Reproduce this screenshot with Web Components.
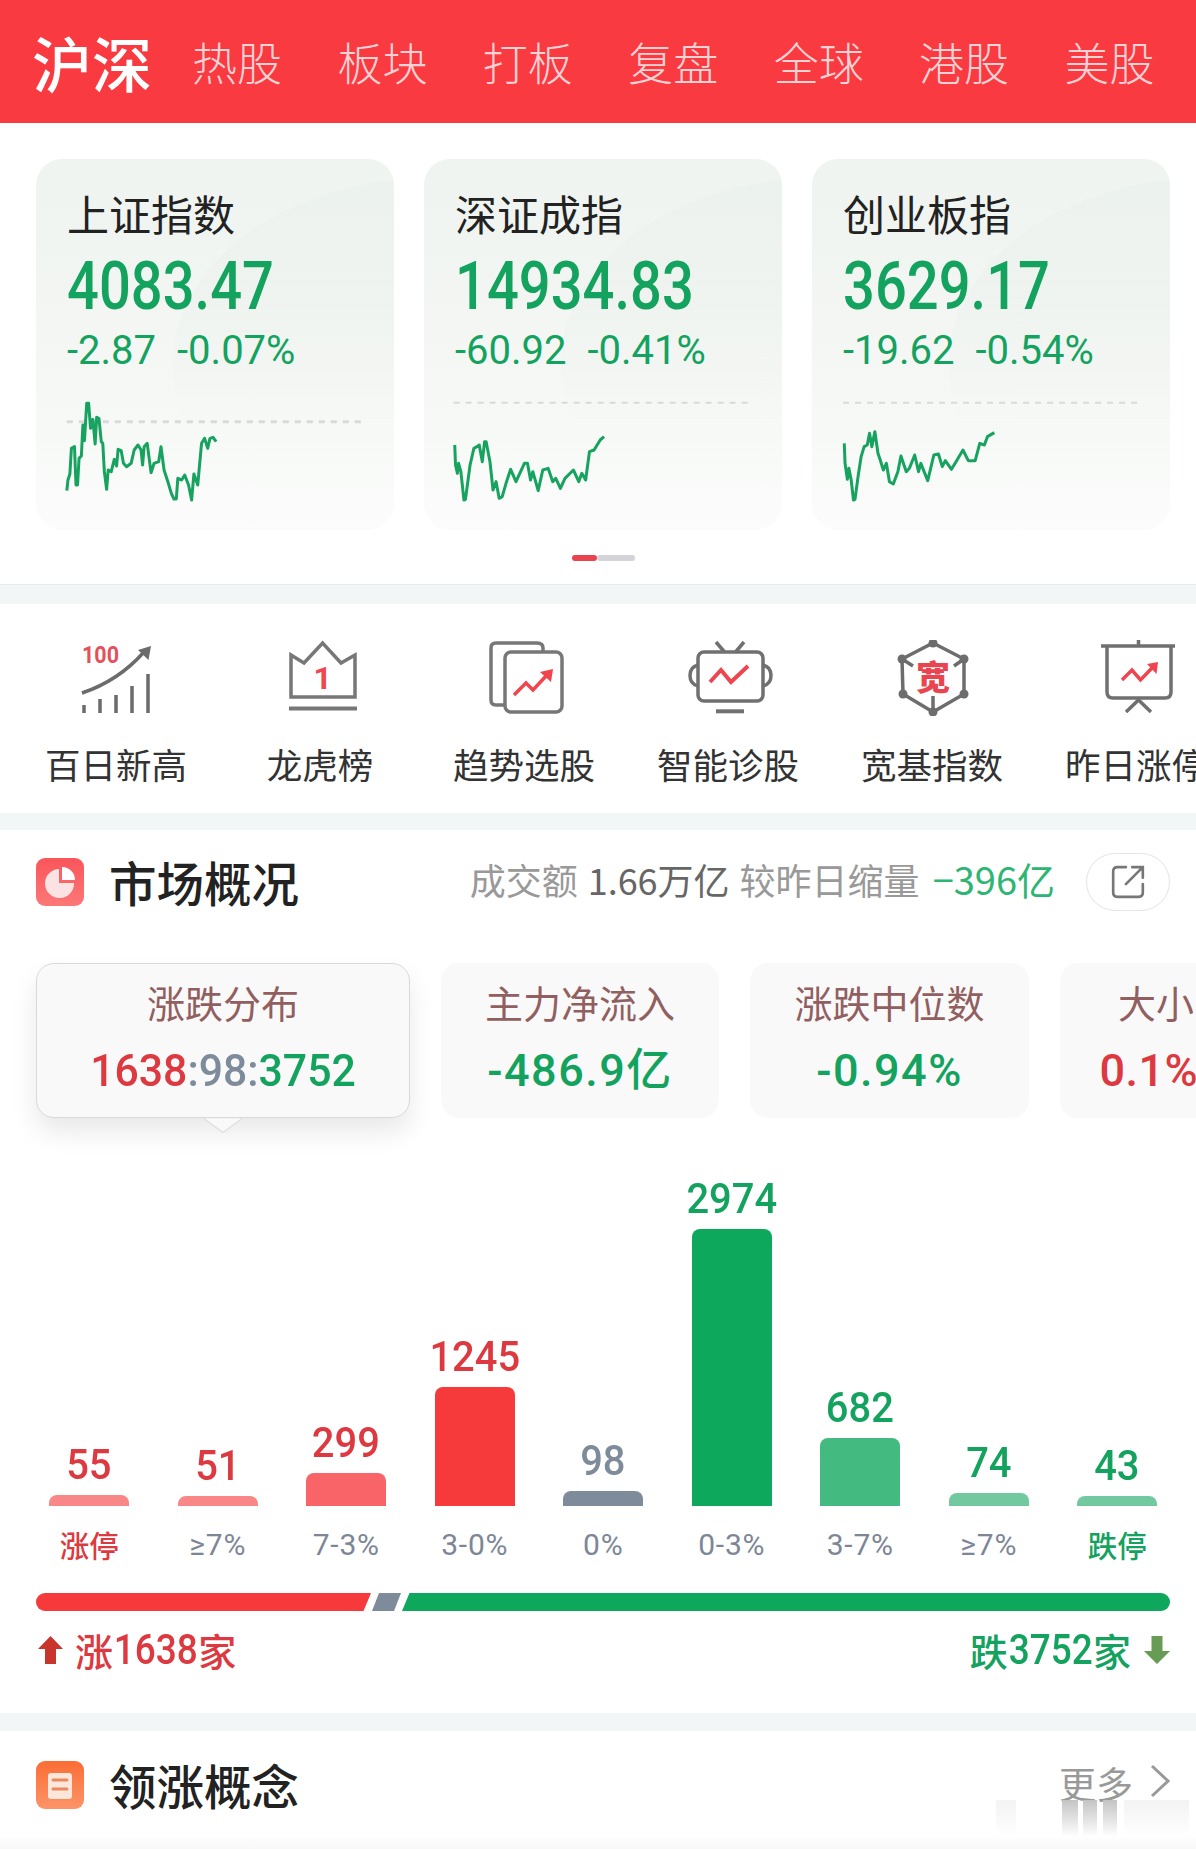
<!DOCTYPE html>
<html lang="zh"><head><meta charset="utf-8"><title>沪深</title>
<style>
html,body{margin:0;padding:0;background:#fff}
body{width:1196px;height:1849px;overflow:hidden;font-family:Roboto,"Noto Sans CJK SC",sans-serif;--num:Roboto,"Noto Sans CJK SC",sans-serif;--red:#dc3a40;--green:#14a25f;color:#222}
</style></head><body>
<market-tabs></market-tabs>
<index-panel>
 <index-card name="上证指数" value="4083.47" c1="-2.87" c2="-0.07%" x0="156.8" lx0="172" lx1="942" ly="365" lw="3" pts="172,572 175,540 180,522 184,445 192,440 196,555 200,555 204,475 210,468 214,375 218,422 224,310 229,310 234,385 240,358 246,432 250,352 256,356 262,425 266,430 270,515 276,568 280,510 288,515 296,478 302,498 306,448 314,452 320,490 328,500 340,490 348,450 358,435 366,450 370,495 374,440 382,430 392,518 400,490 412,485 418,440 426,510 436,545 445,580 452,597 458,597 462,535 472,540 480,525 490,555 498,600 504,522 514,555 524,430 532,415 540,445 546,415 554,412 562,425"></index-card>
 <index-card name="深证成指" value="14934.83" c1="-60.92" c2="-0.41%" x0="1173" lx0="1185" lx1="1957" ly="308" lw="2" pts="1188,435 1190,495 1195,520 1198,490 1204,515 1212,600 1216,598 1228,495 1238,445 1246,440 1252,435 1260,485 1266,425 1270,425 1280,485 1288,570 1296,545 1304,595 1312,590 1322,550 1334,508 1348,545 1370,490 1378,490 1386,540 1392,515 1406,572 1418,510 1432,505 1444,545 1452,535 1464,565 1476,535 1498,510 1512,545 1520,520 1530,540 1540,455 1552,450 1568,420 1578,410"></index-card>
 <index-card name="创业板指" value="3629.17" c1="-19.62" c2="-0.54%" x0="619" lx0="635" lx1="1410" ly="308" lw="2" pts="638,430 640,490 646,538 650,505 656,540 662,600 666,598 674,530 682,470 690,440 698,435 704,400 710,440 718,395 726,460 732,480 740,510 748,490 756,545 766,552 778,515 786,468 800,515 808,505 822,465 832,515 838,490 856,542 872,465 884,462 894,500 902,482 918,508 930,485 948,450 962,482 980,482 992,430 1004,435 1012,410 1030,398"></index-card>
</index-panel>
<gap-bar style="height:19px"></gap-bar>
<shortcut-row>
 <short-cut label="百日新高"><svg viewBox="0 0 80 76" width="80" height="76" fill="none" stroke="#6b6b6b" stroke-width="3.5"><text x="6" y="23" font-family="Roboto" font-weight="700" font-size="24" fill="#e5505a" stroke="none" textLength="37" lengthAdjust="spacingAndGlyphs">100</text><path d="M6 53C30 45 52 30 68 12"/><path d="M75 6 62 10 72.500 20Z" fill="#6b6b6b" stroke="none"/><path d="M8 65V73M24 59V73M40 55V73M56 46V73M72 34V73"/></svg></short-cut>
 <short-cut label="龙虎榜"><svg viewBox="0 0 80 76" width="80" height="76" fill="none" stroke="#777" stroke-width="3.500"><path d="M11 15 24 23 42.600 3 61 23 75 15V57H11Z"/><path d="M9 68.500H77" stroke-width="4"/><text x="42.600" y="49" text-anchor="middle" font-family="Roboto" font-weight="700" font-size="32" fill="#ef4650" stroke="none">1</text></svg></short-cut>
 <short-cut label="趋势选股"><svg viewBox="0 0 80 76" width="80" height="76" fill="none" stroke="#777" stroke-width="3.500"><path d="M59 12V8Q59 3 53 3H12Q7 3 7 8V60Q7 65 12 65H20"/><rect x="21" y="12" width="57" height="60" rx="6"/><path d="M30 55 42 43 49 50 63 35" stroke="#f0454f"/><path d="M69 29 56 32 67 42Z" fill="#f0454f" stroke="none"/></svg></short-cut>
 <short-cut label="智能诊股"><svg viewBox="1 0 86 76" width="86" height="76" fill="none" stroke="#707070" stroke-width="3.500"><rect x="11" y="12" width="65" height="49" rx="6"/><path d="M29 2 37.500 12M57 2 48.600 12"/><path d="M11 25Q3 27 3 35.500T11 46M76 25Q84 27 84 35.500T76 46"/><path d="M29 71.300H57" stroke-width="4"/><path d="M23 42 34 30 44 42 61 26" stroke="#ee4550" stroke-width="4"/></svg></short-cut>
 <short-cut label="宽基指数"><svg viewBox="2 0 86 76" width="86" height="76" fill="none" stroke="#6d6d6d" stroke-width="3.500"><path d="M43 3 74 19V54L43 72 13 54 12 19Z"/><path d="M12 19 23 26M74 19 64 26M43 72V56"/><g fill="#6d6d6d" stroke="none"><circle cx="43" cy="3" r="4.500"/><circle cx="74" cy="19" r="4.500"/><circle cx="74" cy="54" r="4.500"/><circle cx="43" cy="72" r="4.500"/><circle cx="13" cy="54" r="4.500"/><circle cx="12" cy="19" r="4.500"/></g><text x="43" y="50" text-anchor="middle" font-family="Noto Sans CJK SC" font-weight="900" font-size="34" fill="#ea4450" stroke="none">宽</text></svg></short-cut>
 <short-cut label="昨日涨停"><svg viewBox="2 0 86 76" width="86" height="76" fill="none" stroke="#707070" stroke-width="3.500"><path d="M7 6H81M44.500 0V6"/><path d="M13 6V52Q13 58 19 58H71Q77 58 77 52V6"/><path d="M32 72 44.500 60 57 72"/><path d="M28 40 38 30 46.500 40 58 28" stroke="#ee4550"/><path d="M64 22 53 24 62.500 34Z" fill="#ee4550" stroke="none"/></svg></short-cut>
</shortcut-row>
<gap-bar style="height:17px"></gap-bar>
<market-overview></market-overview>
<gap-bar style="height:18px"></gap-bar>
<concept-section></concept-section>
<script>
function reg(name,css,html){
  customElements.define(name,class extends HTMLElement{
    constructor(){super();const r=this.attachShadow({mode:'open'});r.innerHTML='<style>'+css+'</style>'+(typeof html==='function'?html(this):html);}
  });
}
const at=(el,k)=>el.getAttribute(k);

reg('market-tabs',`:host{display:flex;align-items:center;height:123px;background:#fa3a41;padding-left:32px;overflow:hidden;font-family:"Noto Sans CJK SC",sans-serif}
b{font-size:60px;font-weight:500;color:#fff;margin-right:40px;line-height:1;white-space:nowrap}
span{font-size:45px;font-weight:300;color:#fdd2d4;margin-right:55.400px;white-space:nowrap;line-height:1}`,
`<b>沪深</b><span>热股</span><span>板块</span><span>打板</span><span>复盘</span><span>全球</span><span>港股</span><span>美股</span>`);

reg('index-panel',`:host{display:block;padding:36px 26px 0 36px;box-sizing:border-box;border-bottom:1px solid #e8ebec;position:relative;background:#fff;height:462px}
.row{display:flex;gap:30px}
.dots{display:flex;justify-content:center;margin-top:25px}
.dots i{display:block;height:6px;border-radius:3px}
.dots i:first-child{width:25px;background:#e8434f}.dots i:last-child{width:38px;background:#d3d3d8}`,
`<div class="row"><slot></slot></div><div class="dots"><i></i><i></i></div>`);

reg('index-card',`:host{display:block;width:358px;height:371px;flex:none;box-sizing:border-box;padding:26px 0 0 31px;border-radius:26px;position:relative;overflow:hidden;
background:linear-gradient(180deg,#eff4f0 0%,#f3f6f3 45%,#fbfcfb 100%)}
:host::before{content:"";position:absolute;inset:0;background:radial-gradient(ellipse 262px 187px at calc(100% + 40px) 205px,rgba(226,235,229,.22) 0 99.500%,rgba(226,235,229,0) 100%);-webkit-mask-image:linear-gradient(180deg,#000 28%,transparent 72%);mask-image:linear-gradient(180deg,#000 28%,transparent 72%)}
.t,.v,.c{position:relative}
.t{font:400 42px/56px "Noto Sans CJK SC",sans-serif;color:#222}
.v{font:500 66px/70px var(--num);color:var(--green);margin-top:11px;white-space:nowrap;transform:scaleX(.85);transform-origin:0 50%}
.c{font:400 40px/40px var(--num);color:var(--green);margin-top:9px;white-space:nowrap}
.c span{margin-left:21px}
svg{display:block;position:absolute;left:25px;top:236px;overflow:visible}`,
el=>{const x0=at(el,'x0');return `<div class="t">${at(el,'name')}</div><div class="v">${at(el,'value')}</div><div class="c">${at(el,'c1')}<span>${at(el,'c2')}</span></div>
<svg width="320" height="115" viewBox="${x0} 285 836 345" preserveAspectRatio="none" fill="none"><line x1="${at(el,'lx0')}" x2="${at(el,'lx1')}" y1="${at(el,'ly')}" y2="${at(el,'ly')}" stroke="#d9d9d9" stroke-width="${at(el,'lw')}" stroke-dasharray="6 6" vector-effect="non-scaling-stroke"/><polyline points="${at(el,'pts')}" stroke="#17a35f" stroke-width="3" stroke-linejoin="round" vector-effect="non-scaling-stroke"/></svg>`});

reg('gap-bar',`:host{display:block;background:#f3f6f7}`,``);

reg('shortcut-row',`:host{display:flex;height:209px;padding:36px 0 0 14px;box-sizing:border-box;overflow:hidden;background:#fff}`,`<slot></slot>`);
reg('short-cut',`:host{display:flex;flex:none;width:204px;flex-direction:column;align-items:center}
.i{height:76px;width:80px;display:block}
.l{font:400 35.500px/50px "Noto Sans CJK SC",sans-serif;color:#333;margin-top:23px;white-space:nowrap}`,
el=>`<div class="i"><slot></slot></div><div class="l">${at(el,'label')}</div>`);

reg('section-head',`:host{display:flex;align-items:center;height:48px;padding:0 26px 0 36px;font-family:"Noto Sans CJK SC",sans-serif}
.ic{width:48px;height:48px;flex:none;display:block}
h2{margin:0 0 0 25px;font-size:47.500px;font-weight:500;line-height:48px;color:#222;white-space:nowrap}
.r{margin-left:auto;display:flex;align-items:center}`,
`<div class="ic"><slot name="icon"></slot></div><h2><slot name="title"></slot></h2><div class="r"><slot></slot></div>`);

reg('turnover-note',`:host{display:flex;align-items:center;font:400 36px/48px "Noto Sans CJK SC",sans-serif;color:#999;white-space:nowrap;margin-top:-6px}
em{font-style:normal;color:#666;margin:0 10px}i{font-style:normal;color:#2eb574;margin-left:13px;font-size:38px}
.b{width:84px;height:58px;border:1.500px solid #e4e4e4;border-radius:29px;box-sizing:border-box;margin:6px 0 0 31px;display:flex;align-items:center;justify-content:center}`,
`<span>成交额</span><em>1.66万亿</em><span>较昨日缩量</span><i>−396亿</i><div class="b"><svg width="36" height="36" viewBox="0 0 34 34" fill="none" stroke="#777" stroke-width="2.500" stroke-linecap="round"><path d="M15 3H7Q3 3 3 7V27Q3 31 7 31H27Q31 31 31 27V19"/><path d="M15 19 31 3M21 3H31V13"/></svg></div>`);

reg('stat-tab',`:host{display:block;flex:none;box-sizing:border-box;height:155px;border-radius:18px;background:#f9f9fa;padding-top:14px;text-align:center;position:relative}
:host([active]){border:1.500px solid #d9d9d9;padding-top:12.500px;box-shadow:0 14px 26px rgba(0,0,0,.09)}
.notch{position:absolute;left:50%;margin-left:-19px;bottom:-15.500px;display:block}
.t{font:400 38px/50px "Noto Sans CJK SC",sans-serif;color:#925f60;white-space:nowrap}
.v{font:500 45px/60px var(--num);margin-top:14px;white-space:nowrap;letter-spacing:var(--ls,1.500px);transform:scaleX(var(--sx,1));margin-left:var(--vm,0)}`,
el=>`<div class="t">${at(el,'label')}</div><div class="v"><slot></slot></div>${el.hasAttribute('active')?'<svg class="notch" width="38" height="16" viewBox="0 0 38 16"><path d="M0 1.500 19 15.500 38 1.500" fill="#f9f9fa" stroke="#dedede" stroke-width="1.200"/></svg>':''}`);

const B=[[55,11,'#f98787','涨停',1],[51,10,'#f98787','≥7%',0],[299,33,'#f96468','7-3%',0],[1245,119,'#f6393b','3-0%',0],[98,15,'#7e8b9b','0%',0],[2974,277,'#0ea85c','0-3%',0],[682,68,'#43bb80','3-7%',0],[74,13,'#73c99f','≥7%',0],[43,10,'#73c99f','跌停',2]];
const cols=B.map((b,i)=>`<div class="col"><div class="n" style="color:${i<4?'var(--red)':i==4?'#7e8b9b':'var(--green)'}">${b[0]}</div><div class="bar" style="height:${b[1]}px;background:${b[2]}"></div><div class="x ${b[4]==1?'xr':b[4]==2?'xg':''}">${b[3]}</div></div>`).join('');
reg('dist-chart',`:host{display:flex;align-items:flex-end;height:447px;padding-left:25px}
.col{flex:none;width:128.500px;display:flex;flex-direction:column;align-items:center}
.n{font:500 42px/40px var(--num);margin-bottom:10px;transform:scaleX(.95)}
.bar{width:80px;border-radius:8px 8px 0 0}
.x{font:400 30px/40px var(--num);color:#7c8696;margin-top:19px;letter-spacing:.8px;white-space:nowrap}
.xr,.xg{font:500 29.500px/38px "Noto Sans CJK SC",sans-serif;margin-bottom:2px;letter-spacing:0}.xr{color:var(--red)}.xg{color:var(--green)}`,cols);

reg('breadth-bar',`:host{display:block;height:18px;margin:28px 26px 0 36px}svg{display:block}`,
`<svg width="1134" height="18" viewBox="0 0 1134 18"><path d="M9 0H335L327.500 18H9A9 9 0 0 1 9 0Z" fill="#f6393b"/><path d="M343 0H365L358 18H336Z" fill="#7e8b9b"/><path d="M373.500 0H1125A9 9 0 0 1 1125 18H366Z" fill="#0ea85c"/></svg>`);

reg('count-row',`:host{display:flex;justify-content:space-between;align-items:center;height:50px;margin:14px 26px 0 38px;font:500 42px/50px var(--num);white-space:nowrap}
div{display:flex;align-items:center}
.u{color:var(--red)}.d{color:var(--green)}svg{display:block;flex:none}.u svg{margin-right:12px}.d svg{margin-left:13px}
span{font:500 38px/50px "Noto Sans CJK SC",sans-serif}
u{text-decoration:none;display:block;transform:scaleX(.88);margin:0 -5.200px}`,
`<div class="u"><svg width="25" height="28" viewBox="0 0 25 28"><path d="M12.500 0 25 13H18V28H7V13H0Z" fill="#c9352c"/></svg><span>涨</span><u>1638</u><span>家</span></div>
<div class="d"><span>跌</span><u>3752</u><span>家</span><svg width="26" height="28" viewBox="0 0 26 28"><path d="M13 28 0 15H7.500V0H18.500V15H26Z" fill="#689b54"/></svg></div>`);

reg('market-overview',`:host{display:block;background:#fff;height:883px;padding-top:28px;box-sizing:border-box;overflow:hidden}
.tabs{display:flex;gap:31px;padding:57px 0 40px 36px;margin-bottom:-40px;overflow:hidden;position:relative;z-index:1}
.r{color:var(--red)}.g{color:var(--green)}.s{color:#7e8b9b}
stat-tab{flex:none}`,
`<section-head><svg slot="icon" width="48" height="48" viewBox="0 0 48 48"><defs><linearGradient id="a" x1="0" y1="0" x2="0" y2="1"><stop offset="0" stop-color="#f9555a"/><stop offset="1" stop-color="#fd7878"/></linearGradient></defs><rect width="48" height="48" rx="9" fill="url(#a)"/><path d="M23 11V25H38A14.500 14.500 0 1 1 23 11Z" fill="#fbe3e3"/><path d="M26 9A13 13 0 0 1 39 22H26Z" fill="#fff"/></svg><span slot="title">市场概况</span><turnover-note></turnover-note></section-head>
<div class="tabs"><stat-tab active label="涨跌分布" style="width:374px;--ls:0;--sx:.95"><span class="r">1638</span><span class="s">:98:</span><span class="g">3752</span></stat-tab><stat-tab label="主力净流入" style="width:278px"><span class="g">-486.9亿</span></stat-tab><stat-tab label="涨跌中位数" style="width:279px"><span class="g">-0.94%</span></stat-tab><stat-tab label="大小" style="width:278px;text-align:left;padding-left:58px;--vm:-18.600px;--ls:.5px"><span class="r">0.1%</span></stat-tab></div>
<dist-chart></dist-chart><breadth-bar></breadth-bar><count-row></count-row>`);

reg('more-link',`:host{display:flex;align-items:center;font:400 37px/48px "Noto Sans CJK SC",sans-serif;color:#999;margin-top:-5px}svg{margin-left:17px;margin-top:-3px;display:block}`,
`更多<svg width="20" height="34" viewBox="0 0 20 34" fill="none" stroke="#999" stroke-width="3"><path d="M2 2 18 17 2 32"/></svg>`);

reg('concept-section',`:host{display:block;background:linear-gradient(180deg,#fff 0 88%,#f8f8f8 100%);height:118px;padding-top:30px;box-sizing:border-box;position:relative;overflow:hidden}
.wm{position:absolute;left:996px;top:69px;display:flex;align-items:flex-start}
.wm i{display:block;height:37px;background:linear-gradient(180deg,#c4c4c4,rgba(255,255,255,0))}`,
`<section-head><svg slot="icon" width="48" height="48" viewBox="0 0 48 48"><defs><linearGradient id="b" x1="0" y1="0" x2="0" y2="1"><stop offset="0" stop-color="#fb6d35"/><stop offset="1" stop-color="#fd9468"/></linearGradient></defs><rect width="48" height="48" rx="9" fill="url(#b)"/><rect x="12" y="12" width="24" height="26" rx="3" fill="#fde6da"/><path d="M17 19H31M17 28H31" stroke="#e98a5e" stroke-width="3" stroke-linecap="round"/></svg><span slot="title">领涨概念</span><more-link></more-link></section-head>
<div class="wm"><i style="width:20px;opacity:.2;margin-right:46px"></i><i style="width:16px;margin-right:5px"></i><i style="width:14px;margin-right:6px"></i><i style="width:14px;margin-right:7px"></i><i style="width:65px;opacity:.2"></i></div>`);
</script>
</body></html>
